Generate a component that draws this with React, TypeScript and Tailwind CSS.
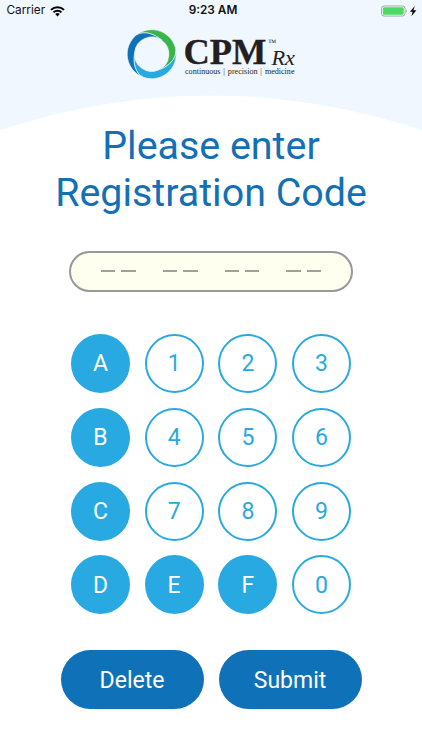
import clsx from "clsx";

const keys = ["A", "1", "2", "3", "B", "4", "5", "6", "C", "7", "8", "9", "D", "E", "F", "0"];

const blade = "M-45-56A72 72 0 0 1 71-11C72 14 50 36 20 46A50 50 0 0 0 29.8-40.3C6.2-61.3-23.9-69.4-45-56Z";

const StatusBar = () => {
  return (
    <div className="relative flex h-[22px] items-center justify-between pl-[6.5px] pr-[5px] font-['Inter',sans-serif] text-[11.8px] text-[#111]">
      <div className="flex items-center gap-[5px]">
        <span>Carrier</span>
        <svg width="15" height="11" viewBox="0 0 15 11" fill="none" stroke="#000" strokeWidth="2">
          <path d="M1 3.9a9.2 9.2 0 0 1 13 0" />
          <path d="M3.5 6.4a5.7 5.7 0 0 1 8 0" />
          <path d="M7.5 10.5 5.2 8.1a3.3 3.3 0 0 1 4.6 0Z" fill="#000" stroke="none" />
        </svg>
      </div>
      <span className="absolute inset-x-0 pl-[4px] text-center font-semibold">9:23 AM</span>
      <svg width="37" height="12" viewBox="0 0 37 12">
        <rect x="1.5" y="1" width="23.5" height="10" rx="2.5" fill="#fff" stroke="#8c9296" strokeWidth="0.8" />
        <rect x="2.8" y="2.2" width="20.9" height="7.6" rx="1.3" fill="#4cd964" />
        <path d="M26.2 4.2q1.6 1.8 0 3.6Z" fill="#8c9296" />
        <path d="M34.8 1 30 6.7h2.7l-1.3 4.5L36.4 5.3h-3Z" fill="#000" />
      </svg>
    </div>
  );
};

const Logo = () => {
  return (
    <svg className="mx-auto block overflow-visible" width="170" height="54" viewBox="126 27 170 54">
      <g transform="translate(151.7 54.2) scale(.342)" stroke="#f0f7fe" strokeWidth="1.8" strokeLinejoin="round">
        <path d={blade} fill="#3ab54a" />
        <path d={blade} fill="#29a9e1" transform="rotate(120)" />
        <path d={blade} fill="#0f72b9" transform="rotate(240)" />
      </g>
      <g fill="#231f20" fontFamily="'Liberation Serif', serif">
        <text x="183.5" y="63.8" fontSize="36" fontWeight="bold" textLength="83" lengthAdjust="spacingAndGlyphs" stroke="#231f20" strokeWidth="0.3">CPM</text>
        <text x="268" y="45" fontSize="8" textLength="8.5" lengthAdjust="spacingAndGlyphs">™</text>
        <text x="271.5" y="64.6" fontSize="20.5" fontStyle="italic" textLength="23.5" lengthAdjust="spacingAndGlyphs">Rx</text>
        <text x="185" y="73.8" fontSize="7.4" wordSpacing="0.8" textLength="109.5" lengthAdjust="spacingAndGlyphs">
          continuous | precision | medicine
        </text>
      </g>
    </svg>
  );
};

const CodeField = () => {
  return (
    <div className="mx-auto flex h-[41px] w-[284px] items-center justify-center gap-[27px] rounded-full border-2 border-[#999] bg-[#fffff0] pb-[1px]">
      {[0, 1, 2, 3].map((pair) => (
        <div key={pair} className="flex gap-[6.4px]">
          <span className="h-[2px] w-[14.3px] bg-[#a0a09c]" />
          <span className="h-[2px] w-[14.3px] bg-[#a0a09c]" />
        </div>
      ))}
    </div>
  );
};

const App = () => {
  return (
    <main className="h-[750px] w-[422px] overflow-hidden bg-white font-['Roboto',sans-serif]">
      <header className="relative h-[132px] bg-[#f0f7fe]">
        <svg className="absolute inset-0" width="422" height="132" viewBox="0 0 422 132">
          <circle cx="211" cy="748.5" r="653" fill="#fff" />
        </svg>
        <StatusBar />
        <div className="relative pt-[5px]">
          <Logo />
        </div>
      </header>

      <h1 className="relative -mt-[9px] text-center text-[39.4px] leading-[46.5px] text-[#1470b5]">
        Please enter
        <br />
        Registration Code
      </h1>

      <div className="pt-[35px]">
        <CodeField />
      </div>

      <div className="mx-auto mt-[42px] grid w-[280px] grid-cols-4 gap-x-[14.8px] gap-y-[14.8px]">
        {keys.map((key) => (
          <button
            key={key}
            className={clsx(
              "flex h-[59px] items-center justify-center rounded-full border-2 border-[#29a9e1] pt-[2px] text-[23px]",
              /[A-F]/.test(key) ? "bg-[#29a9e1] text-white" : "bg-white text-[#29a9e1]"
            )}
          >
            {key}
          </button>
        ))}
      </div>

      <div className="mt-[36px] flex justify-center gap-[15px]">
        {["Delete", "Submit"].map((label) => (
          <button key={label} className="h-[59px] w-[143px] rounded-full bg-[#0f72b9] pt-[2px] text-[23px] text-white">
            {label}
          </button>
        ))}
      </div>
    </main>
  );
};

export default App;
